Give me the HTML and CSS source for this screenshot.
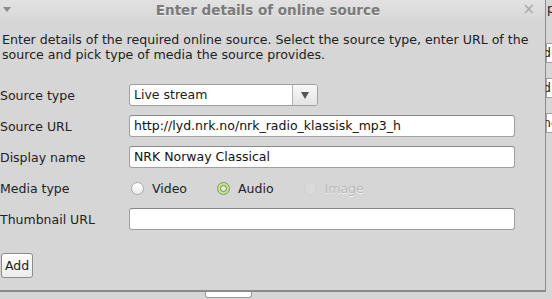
FILE: index.html
```html
<!DOCTYPE html>
<html>
<head>
<meta charset="utf-8">
<link rel="stylesheet" href="styles.css">
</head>
<body>
<div class="screen">
  <div class="top">
    <div class="dialog">
      <div class="titlebar">
        <span class="menu-tri"></span>
        <span class="title">Enter details of online source</span>
        <span class="close">×</span>
      </div>
      <div class="content">
        <p class="desc">Enter details of the required online source. Select the source type, enter URL of the source and pick type of media the source provides.</p>
        <div class="form">
          <label class="lbl">Source type</label>
          <div class="combo"><span class="combo-text">Live stream</span><span class="combo-btn"><span class="arrow"></span></span></div>
          <label class="lbl">Source URL</label>
          <div class="input">http://lyd.nrk.no/nrk_radio_klassisk_mp3_h</div>
          <label class="lbl">Display name</label>
          <div class="input">NRK Norway Classical</div>
          <label class="lbl">Media type</label>
          <div class="radios">
            <span class="radio-item"><span class="radio"></span>Video</span>
            <span class="radio-item"><span class="radio checked"></span>Audio</span>
            <span class="radio-item disabled"><span class="radio"></span>Image</span>
          </div>
          <label class="lbl">Thumbnail URL</label>
          <div class="input"></div>
        </div>
        <div class="actions"><span class="btn">Add</span></div>
      </div>
    </div>
    <div class="side">
      <span class="side-p">p</span>
      <span class="side-btn b1">d</span>
      <span class="side-btn b2">d</span>
      <span class="side-btn b3">ne</span>
    </div>
  </div>
  <div class="bottom"><span class="bottom-btn"></span></div>
</div>
</body>
</html>
```
FILE: styles.css
```css
* { box-sizing: border-box; }
html, body { margin: 0; padding: 0; }
body {
  background: #d6d6d6;
  font-family: "DejaVu Sans", sans-serif;
  font-size: 12.5px;
  color: #222;
  width: 552px;
  height: 299px;
  overflow: hidden;
}
.screen { display: flex; flex-direction: column; }
.top { display: flex; height: 292px; }
.dialog {
  width: 546px;
  height: 292px;
  border-right: 1px solid #8a8a8a;
  border-bottom: 2px solid #8a8a8a;
  background: #d6d6d6;
  display: flex;
  flex-direction: column;
}
.titlebar {
  height: 20px;
  background: linear-gradient(#e2e2e2, #d8d8d8);
  position: relative;
  display: flex;
  align-items: center;
  justify-content: center;
}
.menu-tri {
  position: absolute;
  left: 3px;
  top: 7px;
  width: 0; height: 0;
  border-left: 4px solid transparent;
  border-right: 4px solid transparent;
  border-top: 5px solid #8c8c8c;
}
.title {
  font-weight: bold;
  font-size: 13.5px;
  color: #7a7a7a;
  text-shadow: 0 1px 0 #eee;
  margin-left: -9px;
}
.close {
  position: absolute;
  right: 10px;
  top: 0px;
  font-size: 15px;
  color: #a8a8a8;
  line-height: 19px;
}
.content { padding: 12px 0 0 2px; flex: 1; display: flex; flex-direction: column; }
.desc {
  margin: 0;
  font-size: 12.6px;
  line-height: 15px;
  width: 542px;
}
.form {
  margin-top: 22px;
  margin-left: -2px;
  display: grid;
  grid-template-columns: 129px 386px;
  grid-auto-rows: 22px;
  row-gap: 9px;
  align-items: center;
}
.lbl { color: #222; }
.input {
  height: 22px;
  background: #fff;
  border: 1px solid #a0a0a0;
  border-top-color: #888;
  border-radius: 3px;
  padding: 0 4px;
  line-height: 20px;
  color: #111;
  white-space: nowrap;
}
.combo {
  width: 189px;
  height: 22px;
  display: flex;
  border: 1px solid #a0a0a0;
  border-radius: 3px;
  background: #fff;
  overflow: hidden;
}
.combo-text { flex: 1; padding: 0 4px; line-height: 20px; }
.combo-btn {
  width: 25px;
  border-left: 1px solid #b4b4b4;
  background: linear-gradient(#f8f8f8, #e4e4e4);
  display: flex;
  align-items: center;
  justify-content: center;
}
.arrow {
  width: 0; height: 0;
  border-left: 4px solid transparent;
  border-right: 4px solid transparent;
  border-top: 7px solid #555;
}
.radios { display: flex; align-items: center; padding-left: 2px; }
.radio-item { display: flex; align-items: center; margin-right: 30px; }
.radio {
  width: 13px; height: 13px;
  border-radius: 50%;
  border: 1px solid #a8a8a8;
  background: linear-gradient(#fff, #ececec);
  margin-right: 8px;
  display: flex; align-items: center; justify-content: center;
}
.radio.checked {
  border-color: #7f9e55;
  background: #c6df9c;
}
.radio.checked::after {
  content: "";
  width: 5px; height: 5px;
  border-radius: 50%;
  border: 1px solid #6f8c48;
  background: #e4f1cc;
}
.radio-item.disabled { color: #b8b8b8; text-shadow: 0 1px 0 #f2f2f2; }
.radio-item.disabled .radio { border-color: #d0d0d0; background: #dadada; }
.actions { margin-top: 23px; }
.btn {
  display: inline-block;
  height: 25px;
  width: 32px;
  margin-left: -1px;
  border: 1px solid #8c8c8c;
  border-radius: 3px;
  background: linear-gradient(#fff, #ececec);
  line-height: 23px;
  text-align: center;
  color: #222;
}
.side { flex: 1; position: relative; overflow: hidden; }
.side-p { position: absolute; left: 1px; top: 1px; color: #222; }
.side-btn {
  position: absolute;
  left: 0;
  width: 20px;
  height: 20px;
  background: #fff;
  border: 1px solid #a0a0a0;
  border-right: none;
  line-height: 18px;
  text-indent: -4px;
  color: #222;
}
.b1 { top: 43px; }
.b2 { top: 78px; }
.b3 { top: 113px; }
.bottom { height: 7px; position: relative; }
.bottom-btn {
  position: absolute;
  left: 205px;
  top: 0;
  width: 47px;
  height: 6px;
  background: #fff;
  border: 1px solid #9a9a9a;
  border-top: none;
  border-radius: 0 0 3px 3px;
}
```
